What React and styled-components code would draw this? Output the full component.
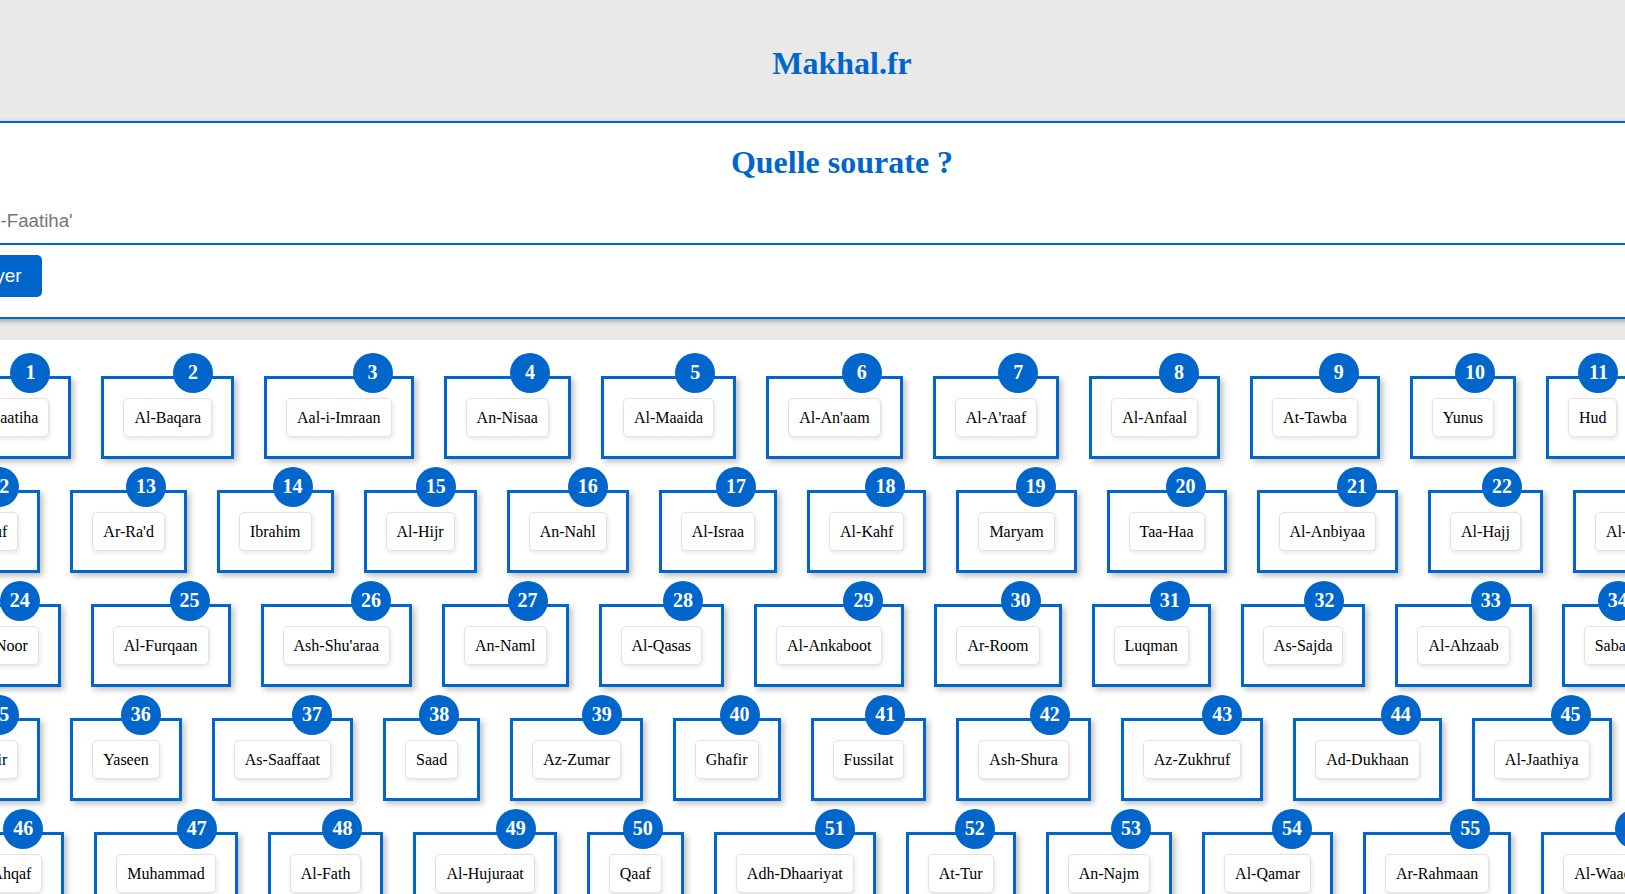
import React from 'react'
import styled, { createGlobalStyle } from 'styled-components'

const SOURATES = [
  'Al-Faatiha', 'Al-Baqara', 'Aal-i-Imraan', 'An-Nisaa', 'Al-Maaida', "Al-An'aam", "Al-A'raaf", 'Al-Anfaal',
  'At-Tawba', 'Yunus', 'Hud', 'Yusuf', "Ar-Ra'd", 'Ibrahim', 'Al-Hijr', 'An-Nahl', 'Al-Israa', 'Al-Kahf',
  'Maryam', 'Taa-Haa', 'Al-Anbiyaa', 'Al-Hajj', 'Al-Muminoon', 'An-Noor', 'Al-Furqaan', "Ash-Shu'araa",
  'An-Naml', 'Al-Qasas', 'Al-Ankaboot', 'Ar-Room', 'Luqman', 'As-Sajda', 'Al-Ahzaab', 'Saba', 'Faatir',
  'Yaseen', 'As-Saaffaat', 'Saad', 'Az-Zumar', 'Ghafir', 'Fussilat', 'Ash-Shura', 'Az-Zukhruf',
  'Ad-Dukhaan', 'Al-Jaathiya', 'Al-Ahqaf', 'Muhammad', 'Al-Fath', 'Al-Hujuraat', 'Qaaf', 'Adh-Dhaariyat',
  'At-Tur', 'An-Najm', 'Al-Qamar', 'Ar-Rahmaan', 'Al-Waaqia', 'Al-Hadid', 'Al-Mujaadila', 'Al-Hashr',
  'Al-Mumtahana', 'As-Saff', "Al-Jumu'a", 'Al-Munaafiqoon', 'At-Taghaabun', 'At-Talaaq', 'At-Tahrim',
  'Al-Mulk', 'Al-Qalam', 'Al-Haaqqa', "Al-Ma'aarij", 'Nooh', 'Al-Jinn', 'Al-Muzzammil', 'Al-Muddaththir',
  'Al-Qiyaama', 'Al-Insaan', 'Al-Mursalaat', 'An-Naba', "An-Naazi'aat", 'Abasa', 'At-Takwir', 'Al-Infitaar',
  'Al-Mutaffifin', 'Al-Inshiqaaq', 'Al-Burooj', 'At-Taariq', "Al-A'laa", 'Al-Ghaashiya', 'Al-Fajr',
  'Al-Balad', 'Ash-Shams', 'Al-Lail', 'Ad-Dhuhaa', 'Ash-Sharh', 'At-Tin', 'Al-Alaq', 'Al-Qadr',
  'Al-Bayyina', 'Az-Zalzala', 'Al-Aadiyaat', "Al-Qaari'a", 'At-Takaathur', 'Al-Asr', 'Al-Humaza', 'Al-Fil',
  'Quraish', "Al-Maa'un", 'Al-Kawthar', 'Al-Kaafiroon', 'An-Nasr', 'Al-Masad', 'Al-Ikhlaas', 'Al-Falaq',
  'An-Naas'
]

function App() {
  return (
    <>
      <GlobalStyle />
      <Page>
        <Header>
          <Logo>Makhal.fr</Logo>
        </Header>

        <Form onSubmit={e => e.preventDefault()}>
          <Title>Quelle sourate ?</Title>
          <Input type="text" placeholder="Ex : 'Al-Faatiha'" />
          <Button type="submit">Envoyer</Button>
        </Form>

        <List>
          { SOURATES.map((name, index) => (
            <Card key={index}>
              <Number>{ index + 1 }</Number>
              <Name>{ name }</Name>
            </Card>
          )) }
        </List>
      </Page>
    </>
  )
}

const BLUE = '#0066cc'

const GlobalStyle = createGlobalStyle`
  html {
    scrollbar-width: none;
  }
  body {
    margin: 0;
    background: #e9e9e9;
    overflow-x: hidden;
    font-family: "Liberation Serif", "Times New Roman", serif;
  }
`

const Page = styled.div`
  width: 1852px;
  margin-left: -84px;
`

const Header = styled.header`
  box-sizing: border-box;
  height: 121px;
  padding-top: 6px;
  display: flex;
  align-items: center;
  justify-content: center;
`

const Logo = styled.h1`
  margin: 0;
  color: ${BLUE};
  font-size: 32px;
  font-weight: bold;
`

const Form = styled.form`
  display: flex;
  flex-direction: column;
  align-items: flex-start;
  padding: 21px 16px 20px;
  margin-bottom: 21px;
  background: white;
  border-top: 2px solid ${BLUE};
  border-bottom: 2px solid ${BLUE};
  box-shadow: 0 2px 5px rgba(0, 0, 0, 0.3);
`

const Title = styled.h2`
  align-self: stretch;
  margin: 0 0 19px;
  text-align: center;
  color: ${BLUE};
  font-size: 32px;
  font-weight: bold;
`

const Input = styled.input`
  box-sizing: border-box;
  width: 100%;
  height: 44.5px;
  padding: 0 11px;
  margin: 0 0 10px;
  border: none;
  border-bottom: 2px solid ${BLUE};
  outline: none;
  background: white;
  font-family: "Liberation Sans", Arial, sans-serif;
  font-size: 18.7px;
  color: #222;

  &::placeholder {
    color: #757575;
  }
`

const Button = styled.button`
  height: 42px;
  padding: 0 20px;
  border: none;
  border-radius: 5px;
  background: ${BLUE};
  color: white;
  font-family: "Liberation Sans", Arial, sans-serif;
  font-size: 19px;
  cursor: pointer;
`

const List = styled.div`
  display: flex;
  flex-wrap: wrap;
  align-items: flex-start;
  gap: 31px 30px;
  padding: 36px 19px 40px 21px;
  min-height: 600px;
  background: white;
`

const Card = styled.div`
  position: relative;
  padding: 19px;
  border: 3px solid ${BLUE};
  background: white;
  box-shadow: 3px 3px 6px rgba(0, 0, 0, 0.25);
`

const Number = styled.span`
  position: absolute;
  top: -26px;
  right: 18px;
  width: 40px;
  height: 40px;
  display: flex;
  align-items: center;
  justify-content: center;
  border-radius: 50%;
  background: ${BLUE};
  color: white;
  font-size: 20px;
  font-weight: bold;
`

const Name = styled.div`
  padding: 10px;
  border: 1px solid #e2e2e2;
  border-radius: 5px;
  background: white;
  font-size: 16px;
  line-height: 17px;
  color: black;
  white-space: nowrap;
  box-shadow: 1px 2px 4px rgba(0, 0, 0, 0.1);
`

export default App
